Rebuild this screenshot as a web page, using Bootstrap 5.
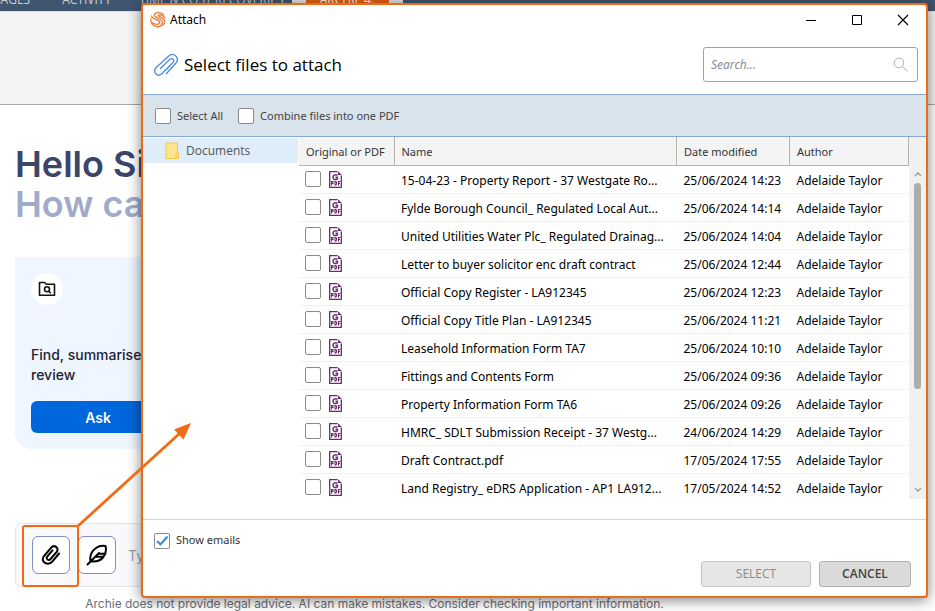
<!DOCTYPE html>
<html lang="en">
<head>
<meta charset="utf-8">
<meta name="viewport" content="width=device-width, initial-scale=1">
<title>Attach</title>
<link href="https://cdn.jsdelivr.net/npm/bootstrap@5.3.0/dist/css/bootstrap.min.css" rel="stylesheet">
<style>
  body { font-family: "Noto Sans", "Open Sans", sans-serif; font-size: 12px; color: #000; min-height: 100vh; overflow: hidden; }
  .app-nav { height: 12px; background: #40566f; border-bottom: 1px solid #dde1e6; overflow: hidden; font-family: "Open Sans", sans-serif; font-size: 12px; line-height: 16px; }
  .app-nav a { color: #c9d2dc; text-decoration: none; white-space: nowrap; margin-top: -8px; }
  .app-nav .nav-cut { margin-left: -30px; }
  .app-nav .nav-tab { margin-left: 8px; border: solid #e4e4e4; border-width: 0 14px; background: #e9600f; color: #fff; width: 111px; text-align: center; height: 20px; }
  .app-band { height: 93px; background: #f4f4f4; border-bottom: 1px solid #a6a6a6; }
  .app-main { max-width: 749px; padding: 39px 15px 0; font-family: Inter, sans-serif; }
  .hello { font-size: 36px; line-height: 40px; font-weight: 600; color: #3a4569; white-space: nowrap; }
  .hello span { color: #a0abcb; }
  .ask-card { width: 166px; margin-top: 33px; padding: 16px; background: #eff6ff; border-radius: 0 0 16px 16px; }
  .ask-icon { width: 32px; height: 32px; }
  .ask-card p { font-size: 14px; line-height: 20px; font-weight: 500; color: #1c2433; margin: 40px 0 16px; white-space: nowrap; }
  .ask-card .btn { height: 32px; padding: 0; font-size: 14px; font-weight: 600; background: #0066dc; border-radius: 6px; color: #fff; }
  .prompt { margin-top: 74px; height: 64px; padding: 0 16px; gap: 8px; background: #f9f9fc; border: 1px solid #e2e4e8; border-radius: 6px; }
  .tool { width: 38px; height: 38px; padding: 0; background: #fff; border: 1px solid #7d90c0; border-radius: 6px; }
  .prompt input { border: 0; background: none; font-size: 14px; padding: 0 4px; min-width: 0; }
  .prompt input::placeholder { color: #9a9ea8; }
  .legal { font-size: 12px; line-height: 16px; margin-top: 9px; color: #6b6e76; white-space: nowrap; }

  .dialog { position: absolute; top: 3px; right: 7px; bottom: 13px; left: 141px; background: #fff; border: 2px solid #ed6a17; border-radius: 4px; box-shadow: 0 2px 14px rgba(0,0,0,.5); overflow: hidden; }
  .title-bar { height: 30px; padding: 0 15px 0 7px; }
  .win-btns { gap: 30px; }
  .win-btns button { border: 0; background: none; padding: 0; width: 16px; height: 16px; line-height: 0; }
  .head { height: 60px; padding: 0 8px 0 9px; }
  .head h1 { font-family: "Open Sans", sans-serif; font-size: 17px; line-height: 24px; font-weight: 400; }
  .search { width: 215px; height: 35px; border: 1px solid #93a5b6; border-radius: 3px; padding: 0 9px 0 7px; }
  .search input { border: 0; outline: 0; min-width: 0; font-size: 12px; font-style: italic; padding: 0; }
  .search input::placeholder { color: #8c8c8c; }
  .options { height: 43px; padding: 0 12px; gap: 15px; background: #d9e3eb; border-top: 1px solid #86a9d2; border-bottom: 1px solid #86a9d2; color: #444; }
  .tick-line { display: flex; align-items: center; gap: 6px; font-size: 11px; }
  .form-check-input { width: 16px; height: 16px; margin: 0; border: 1px solid #8b8b8b; flex: none; }
  .form-check-input[type=checkbox] { border-radius: 2px; }
  .form-check-input:checked { background-color: #fff; border-color: #8b8b8b; background-size: 16px 16px;
    background-image: url("data:image/svg+xml,%3Csvg xmlns='http://www.w3.org/2000/svg' viewBox='0 0 16 16'%3E%3Cpath d='M3 8l3.5 3.5L13.500 3.500' fill='none' stroke='%23418ee6' stroke-width='2.200'/%3E%3C/svg%3E"); }
  .content-pane { min-height: 0; padding-bottom: 20px; }
  .tree { width: 156px; flex: none; padding: 1px 1px 0 0; }
  .tree a { height: 25px; padding-left: 22px; gap: 7px; background: #dfecf9; color: #555; text-decoration: none; font-family: "Open Sans", sans-serif; font-size: 12px; }
  .files { table-layout: fixed; width: 100%; margin: 0; font-size: 12px; white-space: nowrap; }
  .files th { height: 28px; padding: 2px 7px 0; font-size: 11px; font-weight: 400; color: #333; background: #f4f4f4; border-right: 1px solid #b4b4b4; border-bottom: 1px solid #b4b4b4; }
  .files td { height: 28px; padding: 4px 0 0 7px; border-bottom: 1px solid #f0f0f0; line-height: 18px; overflow: hidden; }
  .files td:first-child { padding: 0 6px; }
  .col-pick { width: 95px; } .col-date { width: 113px; } .col-author { width: 119px; }
  .track { width: 17px; flex: none; background: #f0f0f0; padding: 34px 0 6px; }
  .thumb { width: 7px; height: 206px; margin-top: 6px; background: #adadad; border-radius: 4px; }
  .foot { height: 77px; padding: 12px 15px 9px 11px; border-top: 1px solid #d4d4d4; color: #333; }
  .foot .btn { height: 26px; padding: 0; font-family: "Open Sans", sans-serif; font-size: 12px; border-radius: 3px; }
  .btn-select { width: 110px; }
  .btn-select:disabled { background: #e6e6e6; border: 1px solid #c4c4c4; color: #8a8a8a; opacity: 1; }
  .btn-cancel { width: 92px; background: #dadada; border: 1px solid #b0b0b0; color: #444; font-weight: 600; }
  .callout-box { position: absolute; left: 22px; top: 525px; width: 57px; height: 62px; border: 2px solid #f26a11; border-radius: 3px; pointer-events: none; }
  .callout-arrow { position: absolute; left: 77px; top: 422px; pointer-events: none; }
</style>
<script src="https://cdn.jsdelivr.net/npm/bootstrap@5.3.0/dist/js/bootstrap.bundle.min.js"></script>
</head>
<body>
<svg class="d-none" aria-hidden="true">
  <symbol id="pdf" viewBox="0 0 13 17">
    <path d="M8.500.7H.7v15.600h11.600V4.500" fill="none" stroke="#6b2a6b" stroke-width="1.300"/>
    <path d="M9 .3v3.800h3.800z" fill="#6b2a6b"/>
    <path d="M8.500 4.200C6 3 3.800 4.600 4 6.500c.2 2.100 2.700 2.600 4.400 1.300V6.200H6.500" fill="none" stroke="#6b2a6b" stroke-width="1.500"/>
    <path d="M2.500 14.500v-4h1.500v2H2.500M6 10.500v3.500h.8l.8-1v-1.500l-.8-1zM9.500 14.500v-4h2M9.500 12.500h1.500" fill="none" stroke="#6b2a6b" stroke-width="1.100"/>
  </symbol>
</svg>

<nav class="app-nav d-flex align-items-start">
  <a href="#" class="nav-cut">MESSAGES</a>
  <a href="#" class="ps-4 ms-2">ACTIVITY</a>
  <a href="#" class="ps-4 ms-1">TIME &amp; COST RECOVERIES</a>
  <a href="#" class="nav-tab">ARCHIE 4.</a>
</nav>
<div class="app-band"></div>
<main class="app-main">
  <h2 class="hello mb-0">Hello Si<br><span>How can</span></h2>
  <section class="ask-card">
    <div class="ask-icon bg-white rounded-circle d-flex align-items-center justify-content-center">
      <svg width="18" height="16" viewBox="0 0 18 16" fill="none" stroke="#111" stroke-width="1.600"><path d="M1.500 1.500h5l1.800 1.800h8.200v10.900h-15z" stroke-linejoin="round"/><circle cx="9" cy="8.300" r="2.500"/><path d="M10.800 10.200l2 2"/></svg>
    </div>
    <p>Find, summarise<br>review</p>
    <button type="button" class="btn w-100">Ask</button>
  </section>
  <div class="prompt d-flex align-items-center">
    <button type="button" class="btn tool d-flex align-items-center justify-content-center" aria-label="Attach a file">
      <svg width="20" height="22" viewBox="0 0 20 22" fill="none" stroke="#000" stroke-width="2" stroke-linecap="round"><path d="M18 9.500l-6.500 7.800c-4.500 5.300-12.500.8-8.700-5L10 3.800c3.200-3.800 8.600 0 5.700 4L9.600 15c-2 2.200-5-.1-3.400-2.400L11.500 6.400"/></svg>
    </button>
    <button type="button" class="btn tool d-flex align-items-center justify-content-center" aria-label="Compose">
      <svg width="22" height="22" viewBox="0 0 22 22" fill="none" stroke="#000" stroke-width="2" stroke-linecap="round" stroke-linejoin="round"><path d="M1.500 20.500L13 9M4.500 17.300c-1-5.500 1-10 5.500-13.300 3.200-2.300 6.500-2.500 9.500-2 1 4 .5 8-2.500 11.500-2.500 3-6 4.500-12.500 3.800zM9 12.800h8M12 9.700h7.500"/></svg>
    </button>
    <input type="text" class="flex-grow-1" placeholder="Type" aria-label="Message">
  </div>
  <p class="legal text-center mb-0">Archie does not provide legal advice. AI can make mistakes. Consider checking important information.</p>
</main>

<div class="dialog d-flex flex-column" role="dialog" aria-labelledby="dlg-title">
  <div class="title-bar d-flex align-items-center">
    <svg width="16" height="16" viewBox="0 0 16 16" fill="none" stroke="#ee7a35" stroke-width="1.300" stroke-linecap="round"><path d="M13.500 2.600C10.500.2 5.500 0 4.300 2.600c-1.300 3.200 7.500 3.400 8 7.400.2 2.200-1.800 4.400-5 5"/><path d="M15 6c-1.200-2.500-4.500-3.800-6.500-2.800-1.600 1.400 5.300 2 6.200 6 .1 1.500-.7 3-2 4"/><path d="M1.600 3.800C1.200 7.500 9.800 7.300 9.800 10.400c-.2 2.600-5 2.300-7.600.3"/><path d="M.8 6.800C.3 10.800 3 14.200 6.500 14.400"/></svg>
    <span class="ms-1 me-auto">Attach</span>
    <div class="win-btns d-flex">
      <button type="button" aria-label="Minimise"><svg width="12" height="12"><path d="M1 6.500h10" stroke="#000"/></svg></button>
      <button type="button" aria-label="Maximise"><svg width="12" height="12"><path d="M1.500 1.500h9v9h-9z" stroke="#000" fill="none"/></svg></button>
      <button type="button" aria-label="Close"><svg width="12" height="12"><path d="M1 1l10 10M11 1L1 11" stroke="#000" stroke-width="1.200"/></svg></button>
    </div>
  </div>
  <div class="head d-flex align-items-center">
    <svg width="28" height="24" viewBox="0 0 28 24" fill="none" stroke="#4b8bd6" stroke-width="1.300" stroke-linecap="round"><path d="M14.500 20.500L24 10c4-5-2-11.500-7.500-6.800L4.200 14.500c-4 4 .8 10 5.300 6.500L21 9.500c2-2.500-.8-5-3.200-3.200L8.500 15.500M13.500 17.200l5-5"/></svg>
    <h1 class="mb-0 ms-1 me-auto" id="dlg-title">Select files to attach</h1>
    <div class="search d-flex align-items-center">
      <input type="search" class="flex-grow-1" placeholder="Search..." aria-label="Search">
      <svg width="15" height="15" viewBox="0 0 15 15" fill="none" stroke="#b0b0b0"><circle cx="6" cy="6" r="4.800"/><path d="M9.500 9.500l5 5"/></svg>
    </div>
  </div>
  <div class="options d-flex align-items-center">
    <div class="tick-line"><input class="form-check-input" type="checkbox" id="all"><label for="all">Select All</label></div>
    <div class="tick-line"><input class="form-check-input" type="checkbox" id="combine"><label for="combine">Combine files into one PDF</label></div>
  </div>
  <div class="content-pane d-flex flex-grow-1">
    <div class="tree">
      <a href="#" class="d-flex align-items-center"><svg width="14" height="18" viewBox="0 0 14 18"><path d="M1 1h11.500v9.500h1V16.500H1z" fill="#ffe591" stroke="#f2c744"/><path d="M11 16.500v-5l1.500-1.500" fill="none" stroke="#f2c744"/></svg>Documents</a>
    </div>
    <div class="flex-grow-1 overflow-hidden">
      <table class="files">
        <colgroup><col class="col-pick"><col><col class="col-date"><col class="col-author"></colgroup>
        <thead><tr><th>Original or PDF</th><th>Name</th><th>Date modified</th><th>Author</th></tr></thead>
        <tbody id="rows"></tbody>
      </table>
    </div>
    <div class="track d-flex flex-column align-items-center">
      <svg width="8" height="6" viewBox="0 0 8 6"><path d="M1 5l3-3 3 3" fill="none" stroke="#999" stroke-width="1.300"/></svg>
      <div class="thumb"></div>
      <svg class="mt-auto" width="8" height="6" viewBox="0 0 8 6"><path d="M1 1l3 3 3-3" fill="none" stroke="#999" stroke-width="1.300"/></svg>
    </div>
  </div>
  <div class="foot d-flex flex-column justify-content-between">
    <div class="tick-line"><input class="form-check-input" type="checkbox" id="emails" checked><label for="emails">Show emails</label></div>
    <div class="d-flex justify-content-end gap-2">
      <button type="button" class="btn btn-select" disabled>SELECT</button>
      <button type="button" class="btn btn-cancel">CANCEL</button>
    </div>
  </div>
</div>

<div class="callout-box"></div>
<svg class="callout-arrow" width="116" height="106" viewBox="0 0 116 106"><path d="M1 104L102 12" stroke="#f26a11" stroke-width="2.800"/><path d="M114 1l-17 6.500 9.500 10z" fill="#f26a11"/></svg>

<script>
  const files = [
    ["15-04-23 - Property Report - 37 Westgate Ro...", "25/06/2024 14:23"],
    ["Fylde Borough Council_ Regulated Local Aut...", "25/06/2024 14:14"],
    ["United Utilities Water Plc_ Regulated Drainag...", "25/06/2024 14:04"],
    ["Letter to buyer solicitor enc draft contract", "25/06/2024 12:44"],
    ["Official Copy Register - LA912345", "25/06/2024 12:23"],
    ["Official Copy Title Plan - LA912345", "25/06/2024 11:21"],
    ["Leasehold Information Form TA7", "25/06/2024 10:10"],
    ["Fittings and Contents Form", "25/06/2024 09:36"],
    ["Property Information Form TA6", "25/06/2024 09:26"],
    ["HMRC_ SDLT Submission Receipt - 37 Westg...", "24/06/2024 14:29"],
    ["Draft Contract.pdf", "17/05/2024 17:55"],
    ["Land Registry_ eDRS Application - AP1 LA912...", "17/05/2024 14:52"]
  ];
  document.getElementById("rows").innerHTML = files.map(([name, date], i) =>
    `<tr><td><div class="d-flex align-items-center gap-2"><input class="form-check-input" type="checkbox" id="f${i}" aria-label="${name}"><svg width="13" height="17"><use href="#pdf"/></svg></div></td>` +
    `<td><label for="f${i}">${name}</label></td><td>${date}</td><td>Adelaide Taylor</td></tr>`).join("");
</script>
</body>
</html>
